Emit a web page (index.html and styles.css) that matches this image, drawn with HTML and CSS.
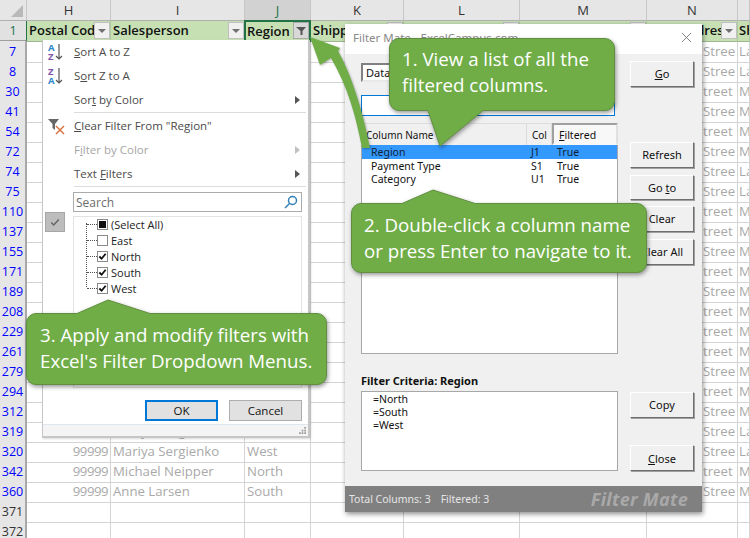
FILE: index.html
```html
<!DOCTYPE html>
<html lang="en">
<head>
<meta charset="utf-8">
<title>Filter Mate</title>
<link rel="stylesheet" href="styles.css">
</head>
<body>
<div class="sheet">
  <div class="row colheads">
    <div class="corner"><span class="corner-tri"></span></div>
    <div class="ch">H</div><div class="ch">I</div><div class="ch ch-sel">J</div><div class="ch">K</div><div class="ch">L</div><div class="ch">M</div><div class="ch">N</div><div class="ch"></div>
  </div>
  <div class="row filterrow">
    <div class="rh rh-first">1</div>
    <div class="fc"><b>Postal Cod</b><span class="fbtn"><i class="tri"></i></span></div>
    <div class="fc"><b>Salesperson</b><span class="fbtn"><i class="tri"></i></span></div>
    <div class="fc fc-sel"><b>Region</b><span class="fbtn fbtn-on"><svg class="funnel" viewBox="0 0 12 10"><path d="M1 1h10L7.5 5v4L5.5 9V5z"/></svg></span></div>
    <div class="fc"><b>Shipping</b><span class="fbtn"><i class="tri"></i></span></div>
    <div class="fc"><b>City</b><span class="fbtn"><i class="tri"></i></span></div>
    <div class="fc"><b>State</b><span class="fbtn"><i class="tri"></i></span></div>
    <div class="fc fc-n"><b>Address</b><span class="fbtn"><i class="tri"></i></span></div>
    <div class="fc"><b>Sh</b></div>
  </div>
  <div class="row"><div class="rh">7</div><div class="c"></div><div class="c"></div><div class="c"></div><div class="c"></div><div class="c"></div><div class="c"></div><div class="c cn"><span>Stree</span></div><div class="c">La</div></div>
  <div class="row"><div class="rh">8</div><div class="c"></div><div class="c"></div><div class="c"></div><div class="c"></div><div class="c"></div><div class="c"></div><div class="c cn"><span>Stree</span></div><div class="c">La</div></div>
  <div class="row"><div class="rh">30</div><div class="c"></div><div class="c"></div><div class="c"></div><div class="c"></div><div class="c"></div><div class="c"></div><div class="c cn"><span>treet</span></div><div class="c">M</div></div>
  <div class="row"><div class="rh">41</div><div class="c"></div><div class="c"></div><div class="c"></div><div class="c"></div><div class="c"></div><div class="c"></div><div class="c cn"><span>Stree</span></div><div class="c">M</div></div>
  <div class="row"><div class="rh">54</div><div class="c"></div><div class="c"></div><div class="c"></div><div class="c"></div><div class="c"></div><div class="c"></div><div class="c cn"><span>treet</span></div><div class="c">M</div></div>
  <div class="row"><div class="rh">72</div><div class="c"></div><div class="c"></div><div class="c"></div><div class="c"></div><div class="c"></div><div class="c"></div><div class="c cn"><span>Stree</span></div><div class="c">M</div></div>
  <div class="row"><div class="rh">74</div><div class="c"></div><div class="c"></div><div class="c"></div><div class="c"></div><div class="c"></div><div class="c"></div><div class="c cn"><span>Stree</span></div><div class="c">La</div></div>
  <div class="row"><div class="rh">75</div><div class="c"></div><div class="c"></div><div class="c"></div><div class="c"></div><div class="c"></div><div class="c"></div><div class="c cn"><span>Stree</span></div><div class="c">La</div></div>
  <div class="row"><div class="rh">110</div><div class="c"></div><div class="c"></div><div class="c"></div><div class="c"></div><div class="c"></div><div class="c"></div><div class="c cn"><span>treet</span></div><div class="c">M</div></div>
  <div class="row"><div class="rh">137</div><div class="c"></div><div class="c"></div><div class="c"></div><div class="c"></div><div class="c"></div><div class="c"></div><div class="c cn"><span>treet</span></div><div class="c">M</div></div>
  <div class="row"><div class="rh">155</div><div class="c"></div><div class="c"></div><div class="c"></div><div class="c"></div><div class="c"></div><div class="c"></div><div class="c cn"><span>Stree</span></div><div class="c">M</div></div>
  <div class="row"><div class="rh">171</div><div class="c"></div><div class="c"></div><div class="c"></div><div class="c"></div><div class="c"></div><div class="c"></div><div class="c cn"><span>treet</span></div><div class="c">M</div></div>
  <div class="row"><div class="rh">189</div><div class="c"></div><div class="c"></div><div class="c"></div><div class="c"></div><div class="c"></div><div class="c"></div><div class="c cn"><span>Stree</span></div><div class="c">M</div></div>
  <div class="row"><div class="rh">208</div><div class="c"></div><div class="c"></div><div class="c"></div><div class="c"></div><div class="c"></div><div class="c"></div><div class="c cn"><span>treet</span></div><div class="c">M</div></div>
  <div class="row"><div class="rh">229</div><div class="c"></div><div class="c"></div><div class="c"></div><div class="c"></div><div class="c"></div><div class="c"></div><div class="c cn"><span>treet</span></div><div class="c">M</div></div>
  <div class="row"><div class="rh">261</div><div class="c"></div><div class="c"></div><div class="c"></div><div class="c"></div><div class="c"></div><div class="c"></div><div class="c cn"><span>treet</span></div><div class="c">M</div></div>
  <div class="row"><div class="rh">279</div><div class="c"></div><div class="c"></div><div class="c"></div><div class="c"></div><div class="c"></div><div class="c"></div><div class="c cn"><span>Stree</span></div><div class="c">M</div></div>
  <div class="row"><div class="rh">294</div><div class="c"></div><div class="c"></div><div class="c"></div><div class="c"></div><div class="c"></div><div class="c"></div><div class="c cn"><span>treet</span></div><div class="c">M</div></div>
  <div class="row"><div class="rh">312</div><div class="c"></div><div class="c"></div><div class="c"></div><div class="c"></div><div class="c"></div><div class="c"></div><div class="c cn"><span>Stree</span></div><div class="c">M</div></div>
  <div class="row"><div class="rh">319</div><div class="c num">99999</div><div class="c">Mariya Sergienko</div><div class="c">West</div><div class="c"></div><div class="c"></div><div class="c"></div><div class="c cn"><span>Stree</span></div><div class="c">La</div></div>
  <div class="row"><div class="rh">320</div><div class="c num">99999</div><div class="c">Mariya Sergienko</div><div class="c">West</div><div class="c"></div><div class="c"></div><div class="c"></div><div class="c cn"><span>Stree</span></div><div class="c">La</div></div>
  <div class="row"><div class="rh">342</div><div class="c num">99999</div><div class="c">Michael Neipper</div><div class="c">North</div><div class="c"></div><div class="c"></div><div class="c"></div><div class="c cn"><span>treet</span></div><div class="c">M</div></div>
  <div class="row"><div class="rh">360</div><div class="c num">99999</div><div class="c">Anne Larsen</div><div class="c">South</div><div class="c"></div><div class="c"></div><div class="c"></div><div class="c cn"><span>Stree</span></div><div class="c">M</div></div>
  <div class="row"><div class="rh rh-plain">371</div><div class="c"></div><div class="c"></div><div class="c"></div><div class="c"></div><div class="c"></div><div class="c"></div><div class="c"></div><div class="c"></div></div>
  <div class="row"><div class="rh rh-plain">372</div><div class="c"></div><div class="c"></div><div class="c"></div><div class="c"></div><div class="c"></div><div class="c"></div><div class="c"></div><div class="c"></div></div>
</div>

<div class="menu">
  <div class="mi">
    <svg class="mi-icon" viewBox="0 0 20 20"><text x="3" y="9" class="az-a">A</text><text x="3" y="18" class="az-z">Z</text><path class="sort-arrow" d="M14 2v15M11 14l3 3 3-3"/></svg>
    <span class="mt"><u>S</u>ort A to Z</span>
  </div>
  <div class="mi">
    <svg class="mi-icon" viewBox="0 0 20 20"><text x="3" y="9" class="az-z">Z</text><text x="3" y="18" class="az-a">A</text><path class="sort-arrow" d="M14 2v15M11 14l3 3 3-3"/></svg>
    <span class="mt">S<u>o</u>rt Z to A</span>
  </div>
  <div class="mi"><span class="mi-icon"></span><span class="mt">Sor<u>t</u> by Color</span><i class="sub"></i></div>
  <div class="msep"></div>
  <div class="mi">
    <svg class="mi-icon" viewBox="0 0 20 20"><path class="cf-funnel" d="M3 3h11L10 8v6L7.500 12V8z"/><path class="cf-x" d="M11 10l8 8M19 10l-8 8"/></svg>
    <span class="mt"><u>C</u>lear Filter From "Region"</span>
  </div>
  <div class="mi mi-off"><span class="mi-icon"></span><span class="mt">F<u>i</u>lter by Color</span><i class="sub"></i></div>
  <div class="mi"><span class="mi-icon"></span><span class="mt">Text <u>F</u>ilters</span><i class="sub"></i></div>
  <div class="msep"></div>
  <div class="searchbox"><span>Search</span>
    <svg class="mag" viewBox="0 0 14 14"><circle cx="8.500" cy="5.500" r="4"/><path d="M5.500 8.500L1 13"/></svg>
  </div>
  <div class="treebox">
    <div class="tv"></div>
    <div class="ti"><i class="th"></i><span class="cb cb-mixed"><i></i></span><span>(Select All)</span></div>
    <div class="ti"><i class="th"></i><span class="cb"></span><span>East</span></div>
    <div class="ti"><i class="th"></i><span class="cb cb-on"><svg viewBox="0 0 10 10"><path d="M1.500 5l2.500 2.500L8.500 2"/></svg></span><span>North</span></div>
    <div class="ti"><i class="th"></i><span class="cb cb-on"><svg viewBox="0 0 10 10"><path d="M1.500 5l2.500 2.500L8.500 2"/></svg></span><span>South</span></div>
    <div class="ti"><i class="th"></i><span class="cb cb-on"><svg viewBox="0 0 10 10"><path d="M1.500 5l2.500 2.500L8.500 2"/></svg></span><span>West</span></div>
  </div>
  <div class="checktile"><svg viewBox="0 0 12 10"><path d="M1.500 5l3 3L10.500 1.500"/></svg></div>
  <div class="mbtns"><span class="mbtn mbtn-ok">OK</span><span class="mbtn">Cancel</span></div>
  <div class="mgrip"><svg viewBox="0 0 8 8"><path d="M6 0h2v2H6zM3 3h2v2H3zM6 3h2v2H6zM0 6h2v2H0zM3 6h2v2H3zM6 6h2v2H6z"/></svg></div>
</div>

<div class="dialog">
  <div class="dtitle"><span>Filter Mate - ExcelCampus.com</span>
    <svg class="dclose" viewBox="0 0 12 12"><path d="M1 1l10 10M11 1L1 11"/></svg>
  </div>
  <div class="dbody">
    <div class="dleft">
      <div class="dcombo">Data</div>
      <div class="dinput"><i class="tri tri-dark"></i></div>
      <div class="lhead"><span class="lh lh1">Column Name</span><span class="lh lh2">Col</span><span class="lh lh3"><u>F</u>iltered</span></div>
      <div class="lbox">
        <div class="lrow lrow-sel"><span class="l1">Region</span><span class="l2">J1</span><span>True</span></div>
        <div class="lrow"><span class="l1">Payment Type</span><span class="l2">S1</span><span>True</span></div>
        <div class="lrow"><span class="l1">Category</span><span class="l2">U1</span><span>True</span></div>
      </div>
      <div class="fclabel">Filter Criteria: Region</div>
      <div class="fcbox"><div>=North</div><div>=South</div><div>=West</div></div>
    </div>
    <div class="dright">
      <span class="dbtn dbtn-go"><u>G</u>o</span>
      <span class="dbtn dbtn-refresh">Refresh</span>
      <span class="dbtn dbtn-goto">Go <u>t</u>o</span>
      <span class="dbtn">Clear</span>
      <span class="dbtn dbtn-clearall">Clear All</span>
      <span class="dbtn dbtn-copy">Copy</span>
      <span class="dbtn dbtn-close"><u>C</u>lose</span>
    </div>
  </div>
  <div class="dstatus"><span>Total Columns: 3</span><span class="dst2">Filtered: 3</span><em>Filter Mate</em></div>
</div>

<svg class="arrow" viewBox="0 0 70 125">
  <path d="M0 0L30 11 28 14C40 35 52 70 60 111L52 111C46 80 38 50 21 21L10 28z"/>
</svg>

<div class="callout c1">
  <svg class="cshape" viewBox="0 0 226 110"><path d="M10 .5H216a9.500 9.500 0 0 1 9.500 9.500V63a9.500 9.500 0 0 1-9.500 9.500H94L51 108 39 72.500H10A9.500 9.500 0 0 1 .5 63V10A9.500 9.500 0 0 1 10 .5z"/></svg>
  <p>1. View a list of all the<br>filtered columns.</p>
</div>
<div class="callout c2">
  <svg class="cshape" viewBox="0 -14 296 84"><path d="M10 .5H51L82-13 124 .5H286a9.500 9.500 0 0 1 9.500 9.500V60a9.500 9.500 0 0 1-9.500 9.500H10A9.500 9.500 0 0 1 .5 60V10A9.500 9.500 0 0 1 10 .5z"/></svg>
  <p>2. Double-click a column name<br>or press Enter to navigate to it.</p>
</div>
<div class="callout c3">
  <svg class="cshape" viewBox="0 -14 301 86"><path d="M10 .5H51L82-13 124 .5H291a9.500 9.500 0 0 1 9.500 9.500V62a9.500 9.500 0 0 1-9.500 9.500H10A9.500 9.500 0 0 1 .5 62V10A9.500 9.500 0 0 1 10 .5z"/></svg>
  <p>3. Apply and modify filters with<br>Excel's Filter Dropdown Menus.</p>
</div>
</body>
</html>
```
FILE: styles.css
```css
* { box-sizing: border-box; }
html, body { margin: 0; padding: 0; }
body { width: 750px; height: 538px; overflow: hidden; position: relative; background: #fff; font-family: "Open Sans", "Noto Sans", sans-serif; }

/* sheet */
.sheet { width: 750px; height: 538px; overflow: hidden; }
.row { display: grid; grid-template-columns: 27px 84px 134px 66px 93px 116px 127px 91px 12px; height: 20px; }
.colheads { height: 21px; background: #e6e6e6; color: #333; font-size: 13px; }
.corner { border-right: 1px solid #c6c6c6; border-bottom: 1px solid #b0b0b0; display: flex; align-items: flex-end; justify-content: flex-end; padding: 0 3px 3px 0; }
.corner-tri { width: 0; height: 0; border-left: 12px solid transparent; border-bottom: 12px solid #b9b9b9; }
.ch { display: flex; align-items: center; justify-content: center; border-right: 1px solid #c6c6c6; border-bottom: 1px solid #b0b0b0; line-height: 20px; }
.ch-sel { background: #d2d2d2; color: #217346; border-bottom: 1px solid #217346; }

.rh { background: #e6e6e6; border-right: 2px solid #a8a8a8; border-bottom: 1px solid #b4b4b4; color: #0000ff; font-size: 12.500px; line-height: 21px; text-align: center; }
.rh-first { background: #e1e1e1; color: #217346; border-bottom: 2px solid #9f9f9f; border-right: 1px solid #217346; line-height: 19px; }
.rh-plain { color: #333; }

.filterrow { background: #c6e0b4; }
.fc { position: relative; border-right: 1px solid #aecb9b; border-bottom: 1px solid #9fb98f; padding-left: 2px; overflow: hidden; white-space: nowrap; line-height: 19px; font-size: 13px; color: #111; }
.fc b { font-weight: 600; }
.fc-sel { margin: -1px 0 0 -1px; border: 2px solid #217346; padding-left: 1px; line-height: 18px; overflow: visible; }
.fc-n { text-align: right; padding-right: 7px; }
.fc:last-child { padding-left: 1px; }
.fbtn { position: absolute; right: 0; top: 1px; width: 16px; height: 17px; background: #f0f0f0; border: 1px solid #c0c0c0; display: flex; align-items: center; justify-content: center; }
.fbtn-on { right: 0; top: 0; background: #d8d8d8; border-color: #aaa; }
.tri { display: block; width: 0; height: 0; border: 4px solid transparent; border-top: 4px solid #707070; border-bottom-width: 0; }
.tri-dark { border-top-color: #444; }
.funnel { width: 12px; height: 10px; fill: #555; }

.c { border-right: 1px solid #d4d4d4; border-bottom: 1px solid #d4d4d4; font-size: 13.200px; line-height: 21px; color: #a9a9a9; padding-left: 2px; overflow: hidden; white-space: nowrap; }
.c:last-child { padding-left: 1px; }
.num { text-align: right; padding: 0 2px 0 0; letter-spacing: -.5px; }
.cn { display: flex; justify-content: flex-end; padding: 0 1px 0 0; }
.cn span { display: block; width: 33px; }

/* filter menu */
.menu { position: absolute; left: 42px; top: 40px; width: 268px; height: 398px; background: #fff; border: 2px solid #c6c6c6; border-top: 0; border-left-width: 1px; font-family: "Open Sans", sans-serif; font-size: 11.500px; color: #4a4a4a; box-shadow: 1px 1px 2px rgba(0,0,0,.15); }
.mi { height: 24px; display: flex; align-items: center; position: relative; padding-right: 8px; padding-bottom: 1px; }
.mi-icon { width: 20px; height: 20px; margin: 0 9px 0 2px; flex: none; display: block; }
.mt { flex: 1; }
.mi-off { color: #a6a6a6; }
.sub { width: 0; height: 0; border: 4px solid transparent; border-left: 5px solid #555; border-right-width: 0; }
.mi-off .sub { border-left-color: #c0c0c0; }
.msep { height: 1px; margin: 0 2px 1px 31px; background: #dcdcdc; }
.az-a, .az-z { font: bold 9.500px "Open Sans", sans-serif; }
.az-a { fill: #2e86c8; }
.az-z { fill: #8053a8; }
.sort-arrow { fill: none; stroke: #555; stroke-width: 1.200; }
.cf-funnel { fill: #666; }
.cf-x { stroke: #d9733f; stroke-width: 1.500; fill: none; }

.searchbox { margin: 5px 6px 0 30px; height: 20px; border: 1px solid #ababab; display: flex; align-items: center; justify-content: space-between; padding: 0 3px 0 2px; color: #6d6d6d; font-size: 12px; }
.mag { width: 14px; height: 14px; fill: none; stroke: #2e7fb8; stroke-width: 1.500; }
.treebox { position: relative; margin: 4px 6px 0 30px; height: 172px; border: 1px solid #e3e3e3; padding-top: 0; color: #222; font-size: 11px; }
.tv { position: absolute; left: 12px; top: 6px; height: 64px; border-left: 1px dotted #555; }
.ti { height: 16px; display: flex; align-items: center; padding-left: 13px; margin-top: -1px; margin-bottom: 1px; }
.th { width: 10px; border-top: 1px dotted #555; flex: none; }
.cb { width: 11px; height: 11px; border: 1px solid #8a8a8a; background: #fff; margin-right: 3px; flex: none; display: flex; align-items: center; justify-content: center; }
.cb-mixed i { width: 7px; height: 7px; background: #111; display: block; }
.cb svg { width: 9px; height: 9px; fill: none; stroke: #111; stroke-width: 2; }
.checktile { position: absolute; left: 2px; top: 172px; width: 20px; height: 20px; background: #bdbdbd; border: 1px solid #a6a6a6; display: flex; align-items: center; justify-content: center; }
.checktile svg { width: 10px; height: 9px; fill: none; stroke: #666; stroke-width: 1.800; }
.mbtns { display: flex; justify-content: flex-end; gap: 11px; margin: 12px 6px 0 0; }
.mbtn { width: 73px; height: 21px; background: #e1e1e1; border: 1px solid #adadad; color: #111; text-align: center; line-height: 19px; font-size: 11.500px; }
.mbtn-ok { border: 2px solid #0078d7; line-height: 17px; }
.mgrip { position: absolute; left: 0; right: 0; bottom: 0; height: 12px; border-top: 1px solid #dfe8f0; background: #f4f4f4; }
.mgrip svg { position: absolute; right: 2px; bottom: 2px; width: 7px; height: 7px; fill: #9a9a9a; }

/* dialog */
.dialog { position: absolute; left: 345px; top: 24px; width: 357px; height: 488px; background: #f0f0f0; box-shadow: 1px 2px 5px rgba(0,0,0,.45); font-family: "Noto Sans", sans-serif; font-size: 10.500px; color: #111; display: flex; flex-direction: column; }
.dtitle { height: 30px; background: #fff; display: flex; align-items: center; justify-content: space-between; padding: 0 10px 3px 8px; color: #8a8a8a; font-size: 11.500px; }
.dclose { width: 11px; height: 11px; fill: none; stroke: #7a7a7a; stroke-width: 1; }
.dbody { flex: 1; display: flex; gap: 12px; padding: 7px 8px 0 16px; }
.dleft { width: 257px; flex: none; }
.dcombo { width: 90px; height: 19px; margin-top: 2px; background: #fff; border: 2px solid; border-color: #808080 #e8e8e8 #e8e8e8 #808080; padding-left: 3px; line-height: 15px; font-size: 11px; }
.dinput { height: 21px; margin-top: 13px; background: #fff; border: 1px solid #0078d7; width: 254px; display: flex; align-items: center; justify-content: flex-end; padding-right: 3px; }
.lhead { display: grid; grid-template-columns: 166px 25px 66px; height: 22px; margin-top: 7px; font-size: 10px; }
.lh { background: #f0f0f0; border-right: 1px solid #dcdcdc; border-top: 1px solid #dcdcdc; padding: 4px 0 0 5px; white-space: nowrap; }
.lh3 { background: #f8f8f8; border: 2px solid; border-color: #a0a0a0 #e0e0e0 #f8f8f8 #a0a0a0; padding-top: 3px; font-size: 10.500px; }
.lbox { height: 209px; background: #fff; border: 1px solid #a8a8a8; border-top: 0; }
.lrow { display: grid; grid-template-columns: 160px 26px 1fr; height: 13px; line-height: 13px; padding-left: 9px; }
.lrow-sel { height: 14px; line-height: 15px; margin-bottom: 1px; background: #3399ff; color: #123; }
.fclabel { margin-top: 20px; font-weight: 700; height: 17px; line-height: 14px; font-size: 11px; }
.fcbox { height: 80px; background: #fff; border: 1px solid #a8a8a8; padding: 1px 0 0 11px; line-height: 13px; }
.dright { display: flex; flex-direction: column; gap: 6px; width: 64px; font-size: 11px; }
.dbtn { display: block; height: 26px; width: 64px; line-height: 24px; text-align: center; background: #f0f0f0; border: 1px solid; border-color: #fff #6e6e6e #6e6e6e #fff; box-shadow: 1px 1px 0 #a0a0a0; flex: none; }
.dbtn-refresh { margin-top: 49px; }
.dbtn-goto { margin-top: 1px; height: 25px; }
.dbtn-clearall { margin-top: 1px; }
.dbtn-copy { margin-top: 121px; }
.dbtn-close { margin-top: 21px; line-height: 26px; }
.dstatus { height: 26px; background: #808080; color: #e6e6e6; display: flex; align-items: center; padding: 0 14px 0 4px; font-size: 10.500px; }
.dst2 { margin-left: 10px; flex: 1; }
.dstatus em { font: italic 700 18px "Open Sans", sans-serif; color: #a9a9a9; letter-spacing: .3px; }

/* arrow + callouts */
.arrow { position: absolute; left: 310px; top: 37px; width: 70px; height: 125px; fill: #70ad47; overflow: visible; filter: drop-shadow(1px 1px 1px rgba(0,0,0,.3)); }
.callout { position: absolute; color: #fff; font-family: "Open Sans", sans-serif; font-size: 18.700px; line-height: 26px; }
.cshape { position: absolute; display: block; overflow: visible; fill: #70ad47; stroke: #5f8f3e; stroke-width: 1; filter: drop-shadow(1px 2px 2px rgba(0,0,0,.4)); }
.callout p { position: relative; margin: 0; white-space: nowrap; }
.c1 { left: 389px; top: 38px; width: 226px; height: 73px; }
.c1 .cshape { left: 0; top: 0; width: 226px; height: 110px; }
.c1 p { padding: 8px 0 0 13px; }
.c2 { left: 351px; top: 203px; width: 296px; height: 70px; }
.c2 .cshape { left: 0; top: -14px; width: 296px; height: 84px; }
.c2 p { padding: 9px 0 0 13px; }
.c3 { left: 26px; top: 313px; width: 301px; height: 72px; }
.c3 .cshape { left: 0; top: -14px; width: 301px; height: 86px; }
.c3 p { padding: 9px 0 0 14px; }
```
